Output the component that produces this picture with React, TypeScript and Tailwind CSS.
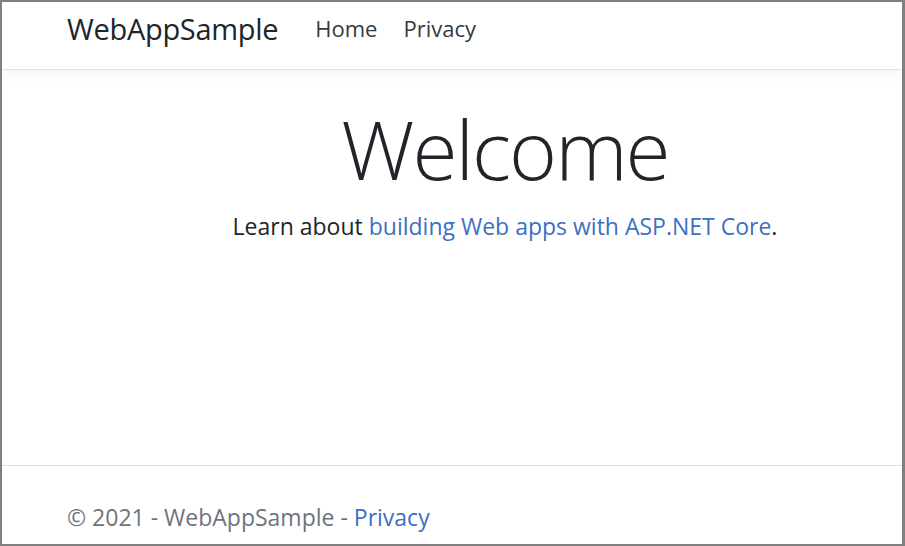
export default function App() {
  return (
    <div
      className="h-[546px] w-[905px] overflow-hidden border-2 border-r-[3px] border-[#7f7f7f] bg-white text-[#212529] flex flex-col"
      style={{ fontFamily: '"Open Sans", "Noto Sans", sans-serif' }}
    >
      {/* Navbar */}
      <header className="h-[68px] shrink-0 border-b border-[#dee2e6] bg-white shadow-[0_6px_16px_rgba(0,0,0,0.04)] relative z-10">
        <nav className="flex items-start pt-[12px] pl-[65px]">
          <span className="text-[29px] leading-none tracking-[-0.3px] mr-[37px]">WebAppSample</span>
          <a className="mt-[3px] text-[22px] leading-none text-[#343a40] mr-[26px]">Home</a>
          <a className="mt-[3px] text-[22px] leading-none text-[#343a40]">Privacy</a>
        </nav>
      </header>

      {/* Main */}
      <main className="flex-1 ml-[65px] w-[876px] shrink-0 text-center pt-[37px]">
        <h1 className="text-[82px] leading-none font-light tracking-[-2px]">Welcome</h1>
        <p className="mt-[20px] text-[23px] leading-normal">
          Learn about <a className="text-[#3d6fc2]">building Web apps with ASP.NET Core</a>.
        </p>
      </main>

      {/* Footer */}
      <footer className="h-[79px] shrink-0 border-t border-[#dee2e6] pl-[65px] flex items-end pb-[10px]">
        <p className="text-[23px] leading-normal text-[#6c757d]">
          © 2021 - WebAppSample - <a className="text-[#3d6fc2]">Privacy</a>
        </p>
      </footer>
    </div>
  );
}
